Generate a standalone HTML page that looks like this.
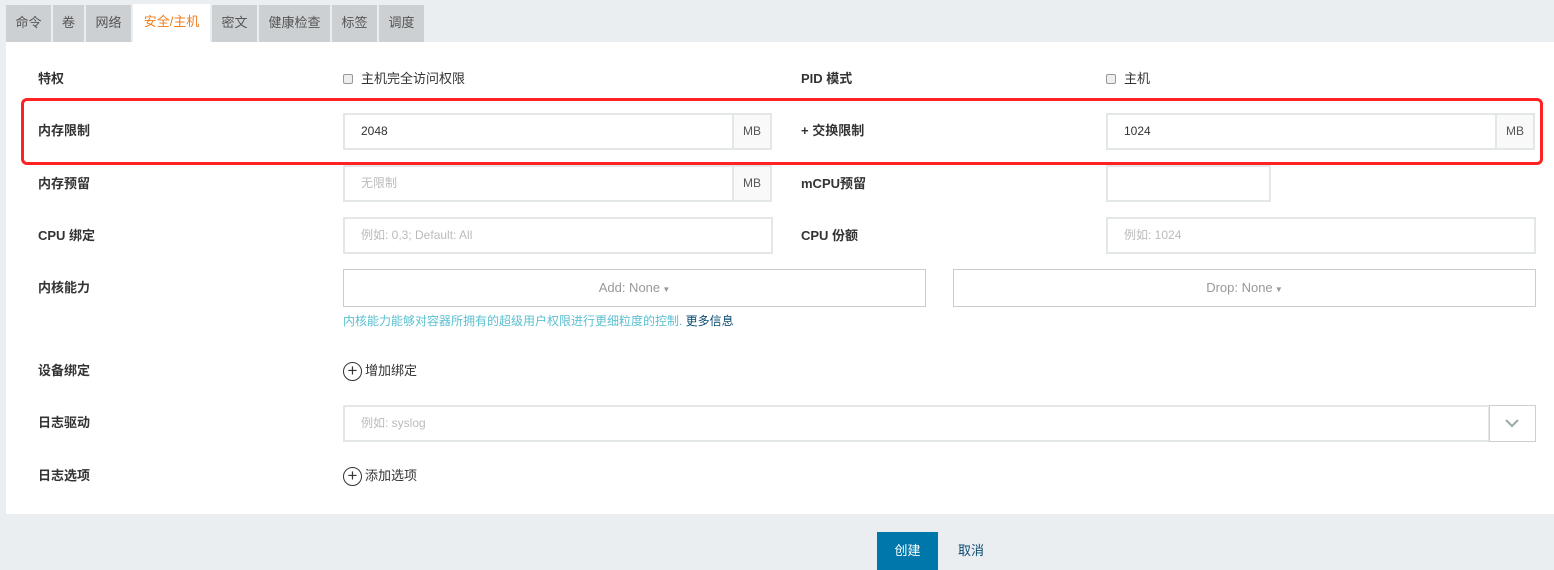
<!DOCTYPE html>
<html><head><meta charset="utf-8"><style>
*{box-sizing:border-box;margin:0;padding:0}
body{width:1554px;height:570px;background:#ebeef0;font-family:"Liberation Sans","Noto Sans CJK SC",sans-serif;font-size:13px;color:#333;position:relative;overflow:hidden}
.a{position:absolute}
.tab{position:absolute;top:5px;height:37px;background:#ccd0d3;color:#555;font-size:13px;line-height:36px;text-align:center}
.tab.on{background:#fff;color:#f07d1b;top:4px;height:38px}
.panel{position:absolute;left:6px;top:42px;width:1548px;height:472px;background:#fff}
.lbl{position:absolute;left:38px;font-weight:bold;font-size:13px;color:#333;line-height:20px}
.inp{position:absolute;height:37px;border:2px solid #e4e7e8;background:#fff;font-size:12px;line-height:33px;padding-left:16px;color:#333}
.ph{color:#bbb}
.add{position:absolute;height:37px;border:2px solid #e4e7e8;background:#f9f9f9;font-size:12px;color:#555;line-height:33px;text-align:center;width:40px}
.btn{position:absolute;height:38px;border:1px solid #ccc;background:#fff;color:#999;font-size:13px;line-height:36px;text-align:center}
.cb{display:inline-block;width:10px;height:10px;border:1px solid #999;border-radius:2px;background:#eee;vertical-align:-1px;margin-right:8px}
.plus{display:inline-block;width:19px;height:19px;border:1.5px solid #333;border-radius:50%;text-align:center;line-height:15px;font-size:17px;vertical-align:middle;margin-right:3px}
</style></head><body>
<div class="tab" style="left:6px;width:45px">命令</div>
<div class="tab" style="left:53px;width:31px">卷</div>
<div class="tab" style="left:86px;width:45px">网络</div>
<div class="tab on" style="left:133px;width:77px">安全/主机</div>
<div class="tab" style="left:212px;width:45px">密文</div>
<div class="tab" style="left:259px;width:71px">健康检查</div>
<div class="tab" style="left:332px;width:45px">标签</div>
<div class="tab" style="left:379px;width:45px">调度</div>
<div class="panel"></div>

<div class="lbl" style="top:69px">特权</div>
<div class="a" style="left:343px;top:69px;line-height:20px"><span class="cb"></span>主机完全访问权限</div>
<div class="lbl" style="left:801px;top:69px">PID 模式</div>
<div class="a" style="left:1106px;top:69px;line-height:20px"><span class="cb"></span>主机</div>

<div class="a" style="left:21px;top:98px;width:1522px;height:67px;border:3.5px solid #f22;border-radius:6px"></div>
<div class="lbl" style="top:121px">内存限制</div>
<div class="inp" style="left:343px;top:113px;width:391px">2048</div>
<div class="add" style="left:732px;top:113px">MB</div>
<div class="lbl" style="left:801px;top:121px">+ 交换限制</div>
<div class="inp" style="left:1106px;top:113px;width:391px">1024</div>
<div class="add" style="left:1495px;top:113px">MB</div>

<div class="lbl" style="top:174px">内存预留</div>
<div class="inp ph" style="left:343px;top:165px;width:391px">无限制</div>
<div class="add" style="left:732px;top:165px">MB</div>
<div class="lbl" style="left:801px;top:174px">mCPU预留</div>
<div class="inp" style="left:1106px;top:165px;width:165px"></div>

<div class="lbl" style="top:226px">CPU 绑定</div>
<div class="inp ph" style="left:343px;top:217px;width:430px">例如: 0,3; Default: All</div>
<div class="lbl" style="left:801px;top:226px">CPU 份额</div>
<div class="inp ph" style="left:1106px;top:217px;width:430px">例如: 1024</div>

<div class="lbl" style="top:278px">内核能力</div>
<div class="btn" style="left:343px;top:269px;width:583px">Add: None<span style="font-size:8px"> ▼</span></div>
<div class="btn" style="left:953px;top:269px;width:583px">Drop: None<span style="font-size:8px"> ▼</span></div>
<div class="a" style="left:343px;top:313px;font-size:12px;color:#5bc0d0;line-height:16px">内核能力能够对容器所拥有的超级用户权限进行更细粒度的控制. <span style="color:#0a4b72">更多信息</span></div>

<div class="lbl" style="top:361px">设备绑定</div>
<div class="a" style="left:343px;top:361px;line-height:20px"><span class="plus">+</span>增加绑定</div>

<div class="lbl" style="top:413px">日志驱动</div>
<div class="inp ph" style="left:343px;top:405px;width:1147px">例如: syslog</div>
<div class="a" style="left:1489px;top:405px;width:47px;height:37px;border:1px solid #ccd0d3;background:#fff">
<svg width="45" height="35" viewBox="0 0 45 35"><path d="M16 14 L22 20 L28 14" fill="none" stroke="#9aa" stroke-width="2"/></svg></div>

<div class="lbl" style="top:466px">日志选项</div>
<div class="a" style="left:343px;top:466px;line-height:20px"><span class="plus">+</span>添加选项</div>

<div class="a" style="left:877px;top:532px;width:61px;height:38px;background:#0077aa;color:#fff;text-align:center;line-height:38px">创建</div>
<div class="a" style="left:958px;top:532px;line-height:38px;color:#0a4b72">取消</div>
</body></html>
